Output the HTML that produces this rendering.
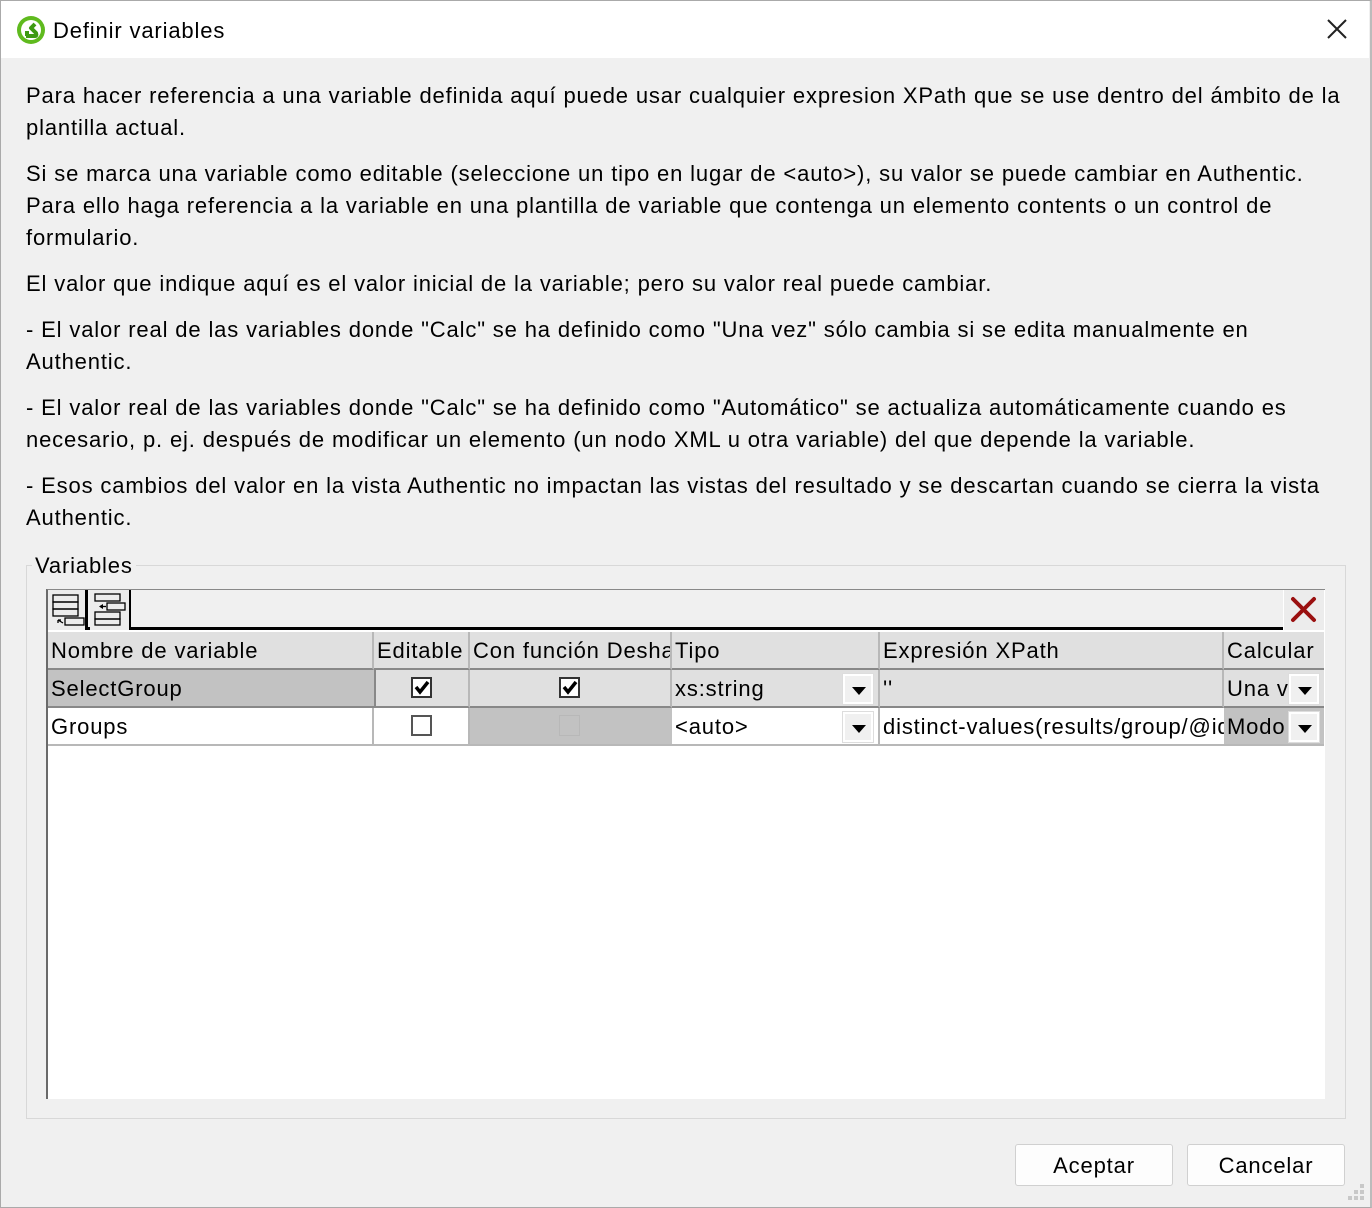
<!DOCTYPE html>
<html><head><meta charset="utf-8">
<style>
*{margin:0;padding:0;box-sizing:border-box}
body{width:1372px;height:1208px;background:#f0f0f0;font-family:"Segoe UI","Liberation Sans",sans-serif;font-size:22px;letter-spacing:0.85px;color:#000;position:relative;overflow:hidden}
.a{position:absolute;white-space:nowrap;line-height:32px}
.win{position:absolute;left:0;top:0;width:1372px;height:1208px;border:1px solid #aaa;border-right:2px solid #bbb}
.title{position:absolute;left:1px;top:1px;width:1368px;height:57px;background:#fff}
.gb{position:absolute;left:26px;top:565px;width:1320px;height:554px;border:1px solid #d8d8d8}
.tbl{position:absolute;left:46px;top:589px;width:1279px;height:510px;background:#fff;border-left:2px solid #6a6a6a;border-top:1px solid #888}
.tb{position:absolute;left:48px;top:590px;width:1276px;height:40px;background:#f0f0f0;border-bottom:3px solid #000}
.cell{position:absolute;height:38px;line-height:38px;padding-left:3px;white-space:nowrap;overflow:hidden}
.hdr{background:#e0e0e0;border-right:2px solid #b8b8b8;border-bottom:2px solid #888}
.dd{position:absolute;width:30px;height:30px;background:#f0f0f0;border:2px solid #fff;outline:1px solid #ddd}
.dd:after{content:"";position:absolute;left:7px;top:11px;border-left:7px solid transparent;border-right:7px solid transparent;border-top:8px solid #000}
.cb{position:absolute;width:21px;height:21px;border:2px solid #333;background:#fff}
.btn{position:absolute;top:1144px;height:42px;background:#fdfdfd;border:1px solid #d0d0d0;border-radius:3px;text-align:center;line-height:42px}
</style></head><body>
<div class="win"></div>
<div class="title"></div>
<svg style="position:absolute;left:16px;top:15px" width="30" height="30" viewBox="0 0 30 30"><circle cx="15" cy="15" r="14" fill="#5fba1e"/><circle cx="15" cy="15" r="10" fill="#fff"/><path d="M10 21 L19 21 Q21 21 20 18 L15 13 L19 9 M11 16 L11 21" stroke="#3d9a12" stroke-width="4" fill="none" stroke-linejoin="round"/></svg>
<div class="a" style="left:53px;top:15px">Definir variables</div>
<svg style="position:absolute;left:1326px;top:18px" width="22" height="22"><path d="M2 2L20 20M20 2L2 20" stroke="#222" stroke-width="2"/></svg>

<div class="a" style="left:26px;top:80px">Para hacer referencia a una variable definida aquí puede usar cualquier expresion XPath que se use dentro del ámbito de la</div>
<div class="a" style="left:26px;top:112px">plantilla actual.</div>
<div class="a" style="left:26px;top:158px">Si se marca una variable como editable (seleccione un tipo en lugar de &lt;auto&gt;), su valor se puede cambiar en Authentic.</div>
<div class="a" style="left:26px;top:190px">Para ello haga referencia a la variable en una plantilla de variable que contenga un elemento contents o un control de</div>
<div class="a" style="left:26px;top:222px">formulario.</div>
<div class="a" style="left:26px;top:268px">El valor que indique aquí es el valor inicial de la variable; pero su valor real puede cambiar.</div>
<div class="a" style="left:26px;top:314px">- El valor real de las variables donde "Calc" se ha definido como "Una vez" sólo cambia si se edita manualmente en</div>
<div class="a" style="left:26px;top:346px">Authentic.</div>
<div class="a" style="left:26px;top:392px">- El valor real de las variables donde "Calc" se ha definido como "Automático" se actualiza automáticamente cuando es</div>
<div class="a" style="left:26px;top:424px">necesario, p. ej. después de modificar un elemento (un nodo XML u otra variable) del que depende la variable.</div>
<div class="a" style="left:26px;top:470px">- Esos cambios del valor en la vista Authentic no impactan las vistas del resultado y se descartan cuando se cierra la vista</div>
<div class="a" style="left:26px;top:502px">Authentic.</div>

<div class="gb"></div>
<div class="a" style="left:32px;top:550px;background:#f0f0f0;padding:0 3px">Variables</div>
<div class="tbl"></div>
<div class="tb"></div>
<div style="position:absolute;left:48px;top:590px;width:40px;height:40px;border-right:3px solid #000;background:#ececec">
<svg width="40" height="40"><g fill="none" stroke="#000" stroke-width="1.3"><rect x="5" y="5" width="25" height="7"/><rect x="5" y="12" width="25" height="7"/><rect x="5" y="19" width="25" height="7"/><rect x="17" y="28" width="19" height="7"/><path d="M15 33 L10 30 M10 30 L10 33 M10 30 L13 30"/></g></svg></div>
<div style="position:absolute;left:90px;top:590px;width:41px;height:40px;border-right:2px solid #000;background:#ececec">
<svg width="40" height="40"><g fill="none" stroke="#000" stroke-width="1.3"><rect x="5" y="4" width="25" height="7"/><rect x="17" y="13" width="18" height="7"/><rect x="5" y="22" width="25" height="7"/><rect x="5" y="29" width="25" height="6"/><path d="M10 16.5 L16 16.5"/></g><path d="M9 16.5 L13 14 L13 19Z"/></svg></div>
<div style="position:absolute;left:1283px;top:590px;width:41px;height:40px;background:#ececec;border-left:1px solid #fff">
<svg width="40" height="40"><path d="M9 9 L30 30 M30 9 L9 30" stroke="#9a1010" stroke-width="4" stroke-linecap="round"/></svg></div>

<div class="cell hdr" style="left:48px;top:632px;width:326px">Nombre de variable</div>
<div class="cell hdr" style="left:374px;top:632px;width:96px">Editable</div>
<div class="cell hdr" style="left:470px;top:632px;width:202px">Con función Deshacer</div>
<div class="cell hdr" style="left:672px;top:632px;width:208px">Tipo</div>
<div class="cell hdr" style="left:880px;top:632px;width:344px">Expresión XPath</div>
<div class="cell hdr" style="left:1224px;top:632px;width:100px;border-right:none">Calcular</div>

<div class="cell" style="left:48px;top:670px;width:326px;background:#c2c2c2;border-bottom:2px solid #888">SelectGroup</div>
<div class="cell hdr" style="left:374px;top:670px;width:96px;border-left:2px solid #888"></div>
<div class="cell hdr" style="left:470px;top:670px;width:202px"></div>
<div class="cell hdr" style="left:672px;top:670px;width:208px">xs:string</div>
<div class="cell hdr" style="left:880px;top:670px;width:344px">''</div>
<div class="cell hdr" style="left:1224px;top:670px;width:100px;border-right:none">Una vez</div>
<div class="cb" style="left:411px;top:677px"></div>
<div class="cb" style="left:559px;top:677px"></div>
<svg style="position:absolute;left:411px;top:677px" width="21" height="21"><path d="M5 10 L9 15 L17 5" stroke="#000" stroke-width="3.5" fill="none"/></svg>
<svg style="position:absolute;left:559px;top:677px" width="21" height="21"><path d="M5 10 L9 15 L17 5" stroke="#000" stroke-width="3.5" fill="none"/></svg>
<div class="dd" style="left:843px;top:674px"></div>
<div class="dd" style="left:1289px;top:674px"></div>

<div class="cell" style="left:48px;top:708px;width:326px;border-right:2px solid #b8b8b8;border-bottom:2px solid #b8b8b8">Groups</div>
<div class="cell" style="left:374px;top:708px;width:96px;border-right:2px solid #b8b8b8;border-bottom:2px solid #b8b8b8"></div>
<div class="cell" style="left:470px;top:708px;width:202px;background:#c2c2c2;border-bottom:2px solid #b8b8b8"></div>
<div class="cell" style="left:672px;top:708px;width:208px;border-right:2px solid #b8b8b8;border-bottom:2px solid #b8b8b8">&lt;auto&gt;</div>
<div class="cell" style="left:880px;top:708px;width:344px;border-bottom:2px solid #b8b8b8">distinct-values(results/group/@id)</div>
<div class="cell" style="left:1224px;top:708px;width:100px;background:#c2c2c2;border-bottom:2px solid #b8b8b8">Modo</div>
<div class="cb" style="left:411px;top:715px;border-color:#555"></div>
<div style="position:absolute;left:559px;top:715px;width:21px;height:21px;border:1px solid #b8b8b8"></div>
<div class="dd" style="left:843px;top:712px"></div>
<div class="dd" style="left:1289px;top:712px"></div>

<div class="btn" style="left:1015px;width:158px">Aceptar</div>
<div class="btn" style="left:1187px;width:158px">Cancelar</div>
<svg style="position:absolute;left:1348px;top:1184px" width="18" height="18" fill="#c8c8c8"><rect x="12" y="0" width="4" height="4"/><rect x="6" y="6" width="4" height="4"/><rect x="12" y="6" width="4" height="4"/><rect x="0" y="12" width="4" height="4"/><rect x="6" y="12" width="4" height="4"/><rect x="12" y="12" width="4" height="4"/></svg>
</body></html>
